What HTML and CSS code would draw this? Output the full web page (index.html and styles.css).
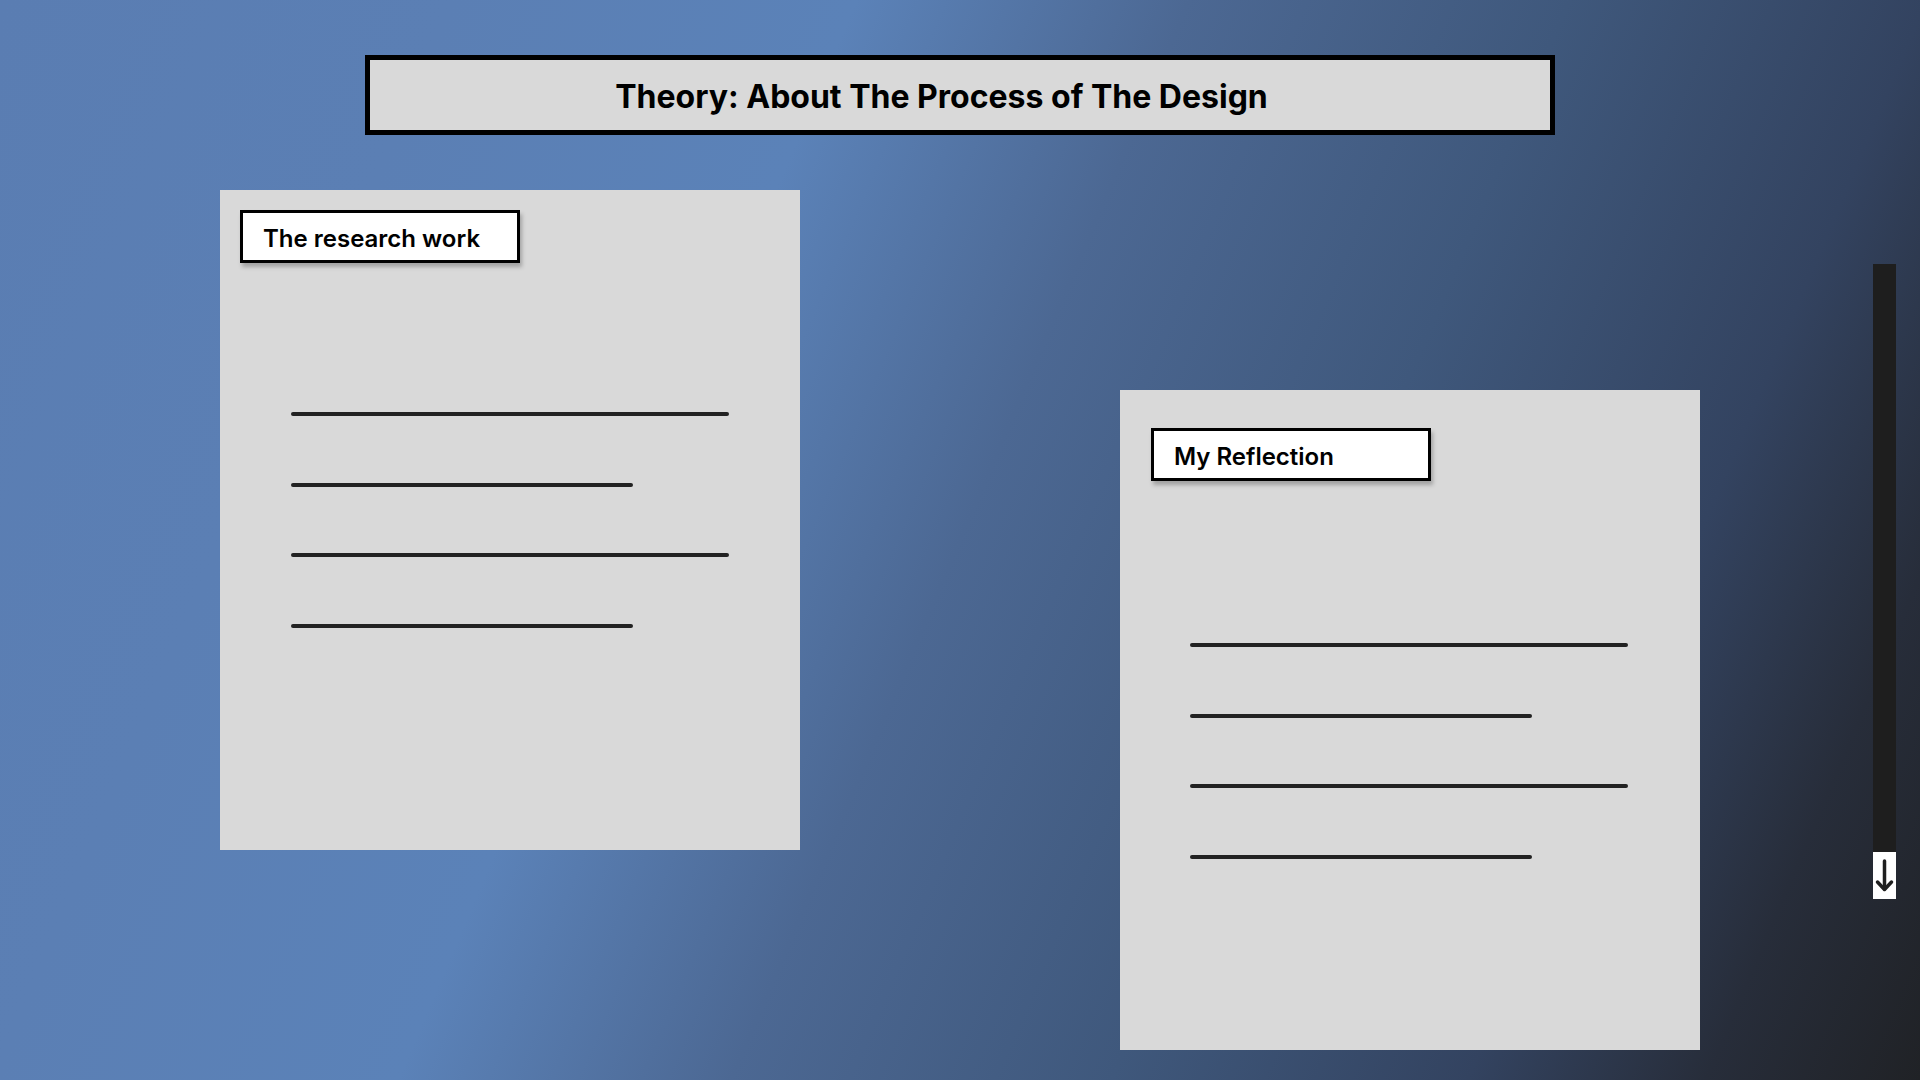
FILE: index.html
```html
<!DOCTYPE html>
<html lang="en">
<head>
<meta charset="utf-8">
<title>Theory: About The Process of The Design</title>
<link rel="stylesheet" href="styles.css">
</head>
<body>
<div class="page">
  <header class="title-bar">
    <h1 class="title">Theory: About The Process of The Design</h1>
  </header>
  <main class="cards">
    <section class="card card-research">
      <div class="label">The research work</div>
      <div class="lines">
        <div class="line long"></div>
        <div class="line short"></div>
        <div class="line long"></div>
        <div class="line short"></div>
      </div>
    </section>
    <section class="card card-reflection">
      <div class="label">My Reflection</div>
      <div class="lines">
        <div class="line long"></div>
        <div class="line short"></div>
        <div class="line long"></div>
        <div class="line short"></div>
      </div>
    </section>
  </main>
  <div class="scroller">
    <div class="track"></div>
    <div class="arrow">
      <svg width="23" height="47" viewBox="0 0 23 47">
        <path d="M11.5 9 V37" stroke="#1e1e1e" stroke-width="3.5" fill="none" stroke-linecap="round"/>
        <path d="M4.5 30 L11.5 37.5 L18.5 30" stroke="#1e1e1e" stroke-width="3.5" fill="none" stroke-linecap="round" stroke-linejoin="round"/>
      </svg>
    </div>
  </div>
</div>
</body>
</html>
```
FILE: styles.css
```css
html, body {
  margin: 0;
  padding: 0;
}
body {
  width: 1920px;
  height: 1080px;
  overflow: hidden;
  font-family: Inter, "Noto Sans", "Liberation Sans", sans-serif;
  background: linear-gradient(113deg,
    #5a7db2 0%,
    #5b7fb4 19%,
    #5b82b8 36%,
    #4c6893 50%,
    #3f587c 66%,
    #334360 81%,
    #272d3a 91%,
    #202226 100%);
}
.page {
  position: relative;
  width: 1920px;
  height: 1080px;
}
.title-bar {
  padding-top: 55px;
  padding-left: 365px;
}
.title {
  box-sizing: border-box;
  width: 1190px;
  height: 80px;
  margin: 0;
  border: 5px solid #000;
  background: #d9d9d9;
  display: flex;
  align-items: center;
  justify-content: center;
  padding-right: 37px;
  padding-top: 2px;
  font-size: 32px;
  font-weight: 700;
  color: #000;
  letter-spacing: 0;
}
.cards {
  display: flex;
  align-items: flex-start;
  gap: 320px;
  padding-left: 220px;
  padding-top: 55px;
}
.card {
  box-sizing: border-box;
  width: 580px;
  height: 660px;
  background: #d9d9d9;
  display: flex;
  flex-direction: column;
  align-items: flex-start;
}
.card-research {
  padding: 20px 0 0 20px;
}
.card-reflection {
  margin-top: 200px;
  padding: 38px 0 0 31px;
}
.label {
  box-sizing: border-box;
  width: 280px;
  height: 53px;
  border: 3px solid #000;
  background: #fff;
  box-shadow: 2px 4px 4px rgba(0, 0, 0, 0.25);
  display: flex;
  align-items: center;
  padding-left: 20px;
  padding-top: 3px;
  font-size: 24px;
  font-weight: 600;
  color: #000;
}
.lines {
  display: flex;
  flex-direction: column;
  gap: 66.5px;
}
.card-research .lines {
  margin-top: 149px;
  margin-left: 51px;
}
.card-reflection .lines {
  margin-top: 162px;
  margin-left: 39px;
}
.line {
  height: 4px;
  border-radius: 2px;
  background: #222;
}
.line.long {
  width: 438px;
}
.line.short {
  width: 342px;
}
.scroller {
  position: absolute;
  left: 1873px;
  top: 264px;
  width: 23px;
  display: flex;
  flex-direction: column;
}
.track {
  height: 588px;
  background: #1e1e1e;
}
.arrow {
  height: 47px;
  background: #fff;
  display: flex;
}
```
